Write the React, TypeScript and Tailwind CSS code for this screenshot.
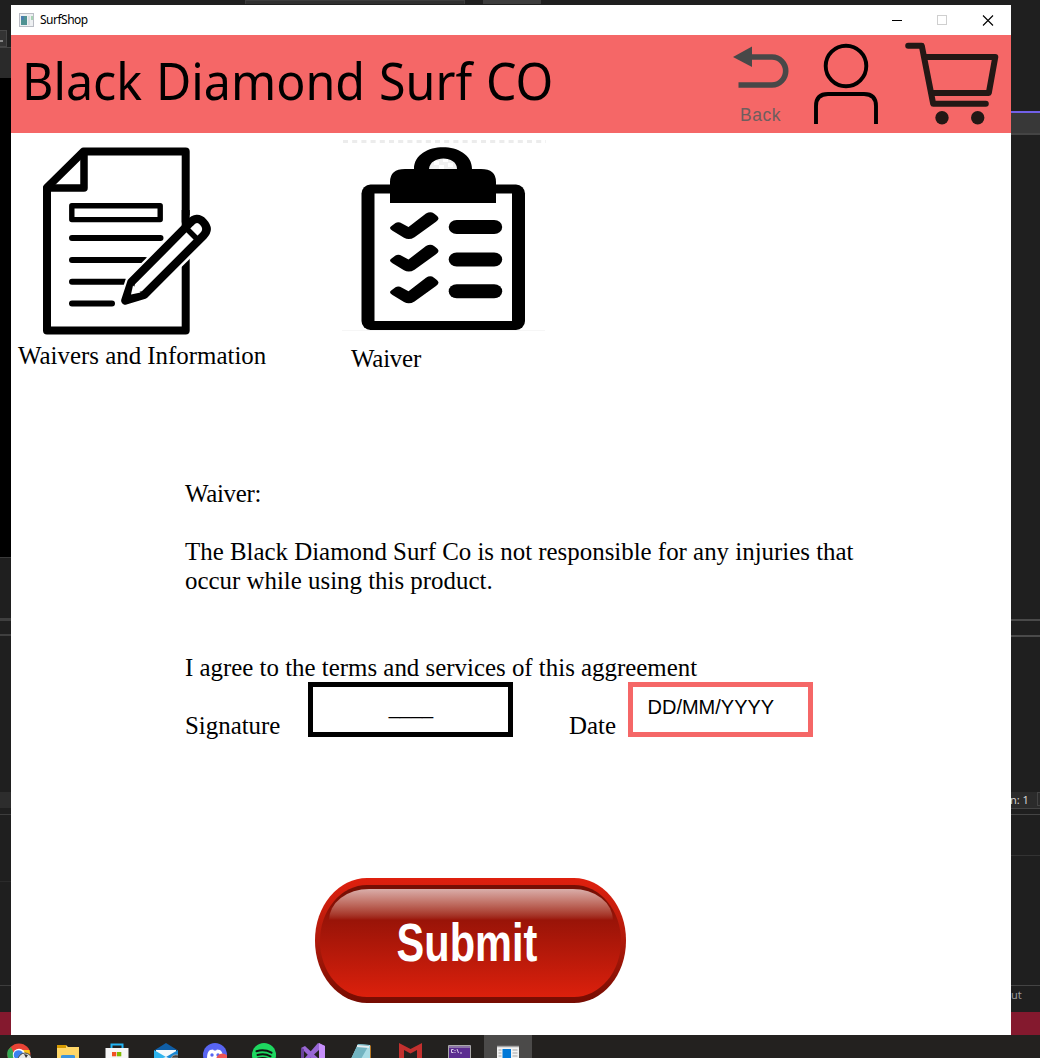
import React from "react";

function AppGlyph() {
  return (
    <svg width="16" height="14" viewBox="0 0 16 14" className="block">
      <rect x="0.5" y="0.5" width="14" height="13" fill="#eef0f2" stroke="#b9bcc4" />
      <rect x="2" y="3" width="6" height="9" fill="#4f9292" />
      <rect x="2" y="3" width="3" height="4" fill="#4a7fae" />
      <rect x="9" y="3" width="2" height="9" fill="#dcdfe2" />
      <rect x="12" y="3" width="2" height="4" fill="#a8d3b4" />
    </svg>
  );
}

function TitleBar() {
  return (
    <div className="flex h-[30px] shrink-0 items-center bg-white pl-2">
      <AppGlyph />
      <span className="ml-[5px] font-['Noto_Sans'] text-[12px] tracking-[-0.5px] text-black">SurfShop</span>
      <svg width="104" height="14" viewBox="0 0 104 14" className="mr-[16px] ml-auto block" fill="none">
        <path d="M1 7.5h10" stroke="#000" />
        <rect x="46.5" y="2.5" width="9" height="9" stroke="#cfcfcf" />
        <path d="M92 2.5l10 10M102 2.5l-10 10" stroke="#000" strokeWidth="1.1" />
      </svg>
    </div>
  );
}

function Header() {
  return (
    <header className="flex h-[98px] shrink-0 bg-[#f56767]">
      <h1 className="mt-[11px] ml-[10.500px] w-[539.500px] origin-left scale-x-[0.948] font-['Noto_Sans'] text-[51px] leading-[68px] [word-spacing:1.500px] whitespace-nowrap text-black">
        Black Diamond Surf CO
      </h1>
      <div className="ml-[171px] flex w-[58px] flex-col">
        <svg width="58" height="46" viewBox="731.5 43 58 46" className="mt-[8px] block">
          <path d="M751 57h20.500a13.700 14 0 0 1 0 28h-33.500" fill="none" stroke="#484848" strokeWidth="5.6" />
          <path d="M732.500 57l19-10.500v20.500z" fill="#484848" />
        </svg>
        <span className="mt-[16px] ml-[8px] font-['Liberation_Sans'] text-[17.500px] leading-[20px] tracking-[0.500px] text-[#6e5e5e]">
          Back
        </span>
      </div>
      <svg width="70" height="84" viewBox="812 42 70 84" className="mt-[7px] ml-[22px] block" fill="none" stroke="#000" strokeWidth="3.9">
        <circle cx="846" cy="66" r="20.300" />
        <path d="M816 124v-18q0-12 12-12h36q12 0 12 12v18" />
      </svg>
      <svg width="96" height="84" viewBox="904 42 96 84" className="mt-[7px] ml-[22px] block" fill="none" stroke="#231815" strokeWidth="6" strokeLinejoin="round" strokeLinecap="round">
        <path d="M908.200 45.800h13.600l11.400 58h52.600" />
        <path d="M926 57h69.300l-6.500 36h-55.500" />
        <g fill="#231815" stroke="none">
          <circle cx="942" cy="117.800" r="6.700" />
          <circle cx="977.700" cy="117.800" r="6.700" />
        </g>
      </svg>
    </header>
  );
}

function DocumentIcon() {
  return (
    <svg width="172" height="190" viewBox="41 146 172 190" className="block" fill="none" stroke="#000" strokeLinejoin="round" strokeLinecap="round">
      <path d="M83.500 151.500h102.200v179H47V187.500z" strokeWidth="8" />
      <path d="M84 152v36H47" strokeWidth="7.500" />
      <rect x="71.800" y="205.800" width="88.400" height="13.800" strokeWidth="5.400" />
      <path d="M72 238h88.500M72 260h73M72 281.800h53M72 303.500h40" strokeWidth="6" />
      <path d="M125 300.500l6-18.500 59-59.500q7-7 14 0t0 14l-59 58z" fill="#fff" stroke="#fff" strokeWidth="12" />
      <path d="M185.700 210v18" strokeWidth="8" strokeLinecap="butt" />
      <path d="M125.300 300.500l6-18.300 58.500-59q7-8 13.500-1t0 13.500l-59 59z" fill="#fff" strokeWidth="8.300" />
      <path d="M186 228l9.500 9.500" strokeWidth="5.500" />
      <path d="M130 284l12 11-17 6z" fill="#000" stroke="none" />
      <path d="M133 285.500l7.500 7-9.500 2z" fill="#fff" stroke="none" />
    </svg>
  );
}

function ClipboardIcon() {
  const rows = [0, 32.5, 64.2];
  return (
    <svg width="204" height="198" viewBox="342 138 204 198" className="block">
      <path d="M343 141.500h203" stroke="#ececec" strokeWidth="3" strokeDasharray="5 4.200" />
      <path d="M339 330.500h206" stroke="#f6f6f6" />
      <rect x="361.500" y="184.500" width="163.500" height="145.500" rx="9" />
      <rect x="374.500" y="193.500" width="137.500" height="127.500" fill="#fff" />
      <path d="M390 203v-21q0-13 15-13h9c0-29 58-29 58 0h9q15 0 15 13v21z" />
      <path d="M429 169c1-14 28-14 28 0z" fill="#f0f0f0" />
      <path d="M434 161h5v4h-5zM443 159h5v3h-5zM439 165h5v4h-5zM448 163h5v4h-5z" fill="#fff" />
      {rows.map((y) => (
        <g key={y} transform={`translate(0 ${y})`}>
          <path d="M390 228q0-1 1.500-2l4-3q3-1.700 6.500.5l6.500 3.500 17.500-13.500q4.500-2.700 8 0 4.500 3 4.500 5 0 1.500-2.500 3.200l-21.500 15.500q-5.500 3.500-10.500.5l-11.500-7q-2.500-1.500-2.500-2.700z" />
          <rect x="448.700" y="220" width="53.500" height="14" rx="8" ry="7" />
        </g>
      ))}
    </svg>
  );
}

function SubmitButton() {
  return (
    <button className="mt-[138px] ml-[304px] block h-[125px] w-[311px] rounded-[52px/62px] bg-linear-to-b from-[#df200e] via-[#b01a0b] to-[#760c02] pt-[7px] pr-[5px] pb-[6px] pl-[5px]">
      <span className="block h-full w-full rounded-[47px/56px] bg-linear-to-b from-[#760f04] from-5% via-[#9a1408] via-32% to-[#dc200c] pt-[4px]">
        <span className="mx-auto block h-[31px] w-[284px] rounded-t-[44px_34px] bg-linear-to-b from-[#d9aeaa] to-[#9a1408]" />
        <span className="mx-auto mt-[-8px] block w-[184px] origin-center translate-x-[-4px] scale-x-[0.77] text-center font-['Liberation_Sans'] text-[54px] leading-[60px] font-bold text-white">
          Submit
        </span>
      </span>
    </button>
  );
}

function Content() {
  return (
    <main className="flex grow flex-col bg-white font-['Liberation_Serif'] text-[24.900px] leading-[29px] text-black">
      <div className="flex h-[346px] shrink-0">
        <div className="w-[320px] shrink-0 pt-[13px]">
          <div className="ml-[30px]">
            <DocumentIcon />
          </div>
          <p className="mt-[5px] ml-[7px] whitespace-nowrap">Waivers and Information</p>
        </div>
        <div className="pt-[5px] pl-[11px]">
          <ClipboardIcon />
          <p className="mt-[8px] ml-[9px] tracking-[-0.2px]">Waiver</p>
        </div>
      </div>
      <div className="ml-[174px] flex w-[700px] shrink-0 flex-col">
        <p className="tracking-[-0.3px]">Waiver:</p>
        <p className="mt-[29px] whitespace-nowrap">
          The Black Diamond Surf Co is not responsible for any injuries that
          <br />
          occur while using this product.
        </p>
        <p className="mt-[58px] whitespace-nowrap">I agree to the terms and services of this aggreement</p>
        <div className="flex h-[58px] items-start">
          <span className="w-[123px] pt-[29px]">Signature</span>
          <div className="h-[55px] w-[205px] border-5 border-black pt-[8px] pl-px text-center font-['Liberation_Sans'] text-[20px] leading-[24px]">
            ____
          </div>
          <span className="ml-[56px] w-[59px] pt-[29px]">Date</span>
          <div className="h-[55px] w-[185px] border-5 border-[#f56767] pt-[8px] pl-[14.500px] font-['Liberation_Sans'] text-[20px] leading-[24px]">
            DD/MM/YYYY
          </div>
        </div>
      </div>
      <SubmitButton />
    </main>
  );
}

function LeftEdge() {
  return (
    <div className="flex w-[11px] shrink-0 flex-col bg-[#1f1f1f]">
      <div className="mt-[25px] h-[17px] w-[7px] border border-l-0 border-[#464646] bg-[#333333] pt-[9px]">
        <div className="h-[2px] w-[3px] bg-[#888888]" />
      </div>
      <div className="h-[31px] border-t border-[#444444] bg-[#2a2a2a]" />
      <div className="h-[480px] border-b border-[#3a3a3a] bg-black" />
      <div className="mt-[60px] h-[3px] bg-[#3f3f3f]" />
      <div className="mt-[13px] h-[2px] bg-[#3f3f3f]" />
      <div className="mt-[156px] h-[16px] bg-[#2d2d2d]" />
      <div className="mt-[6px] h-px bg-[#3d3d3d]" />
      <div className="mt-[66px] h-px bg-[#2b2b2b]" />
      <div className="mt-[103px] h-px bg-[#3d3d3d]" />
      <div className="mt-auto h-[23px] bg-[#84192e]" />
    </div>
  );
}

function RightEdge() {
  return (
    <div className="flex w-[29px] shrink-0 flex-col overflow-hidden bg-[#1f1f1f] font-['Noto_Sans'] whitespace-nowrap">
      <div className="mt-[106px] h-[2px] bg-[#7160e8]" />
      <div className="h-[22px] border-b-2 border-[#444444] bg-[#383838]" />
      <div className="mt-[484px] h-[2px] bg-[#4a4a4a]" />
      <div className="mt-[14px] h-[2px] bg-[#4a4a4a]" />
      <div className="mt-[155px] flex h-[17px] border-b border-[#444444] bg-[#2b2b2b] text-[11px] leading-[16px] text-[#d6d6d6]">
        <span className="ml-[-1px] w-[27px]">n: 1</span>
        <span className="h-[14px] w-[3px] border border-r-0 border-[#444444]" />
      </div>
      <div className="mt-[5px] h-px bg-[#444444]" />
      <div className="mt-[40px] h-px bg-[#333333]" />
      <div className="mt-[129px] h-px bg-[#444444]" />
      <div className="mt-[1px] h-[16px] text-[11px] leading-[16px] text-[#9a9a9a]">ut</div>
      <div className="mt-auto h-[23px] bg-[#84192e]" />
    </div>
  );
}

const taskIcons: React.ReactNode[] = [
  <g key="browser">
    <circle cx="12" cy="12" r="11.500" fill="#ea4335" />
    <path d="M1 7q-2 5 1 10l7-2-5-11z" fill="#34a853" />
    <path d="M12 7h10.500q1 5 0 8H12z" fill="#fbc116" />
    <circle cx="12" cy="12" r="6.200" fill="#fff" />
    <circle cx="11.500" cy="12" r="4.800" fill="#3b82f0" />
    <circle cx="18" cy="17" r="7" fill="#e4e6e5" stroke="#444" />
    <path d="M17 11l4 1-2 3z" fill="#333" />
  </g>,
  <g key="folder">
    <path d="M1 2h9l2 2h11v12H1z" fill="#ffd768" />
    <path d="M1 2h9v3H1z" fill="#d69a00" />
    <path d="M5 15v-2q0-1 2-1h10q2 0 2 1v2z" fill="#3b94dd" />
  </g>,
  <g key="store">
    <path d="M6.500 7V1.500h11V7" fill="none" stroke="#23b5f5" strokeWidth="2" />
    <path d="M.5 5h23v11H.5z" fill="#f6f6f6" />
    <path d="M7 9h4.300v4.300H7z" fill="#f25022" />
    <path d="M12 9h4.300v4.300H12z" fill="#7fba00" />
  </g>,
  <g key="mail">
    <path d="M0 7.500L12 0l12 7.500z" fill="#0f5ea6" />
    <path d="M2 7h20v9H2z" fill="#f3f9fc" />
    <path d="M0 7l12 7-6 2H0z" fill="#2eb4ee" />
    <path d="M24 7l-12 7 6 2h6z" fill="#1687d4" />
    <path d="M17 15q2-4 7-3l3 3z" fill="#444" stroke="#bbb" strokeWidth=".7" />
  </g>,
  <g key="chat">
    <circle cx="12" cy="12" r="12" fill="#5865f2" />
    <path d="M4 15q0-6 3-8l3-.5 1 1h2l1-1 3 .5q3 2 3 8z" fill="#fff" />
    <circle cx="9" cy="12" r="1.700" fill="#5865f2" />
    <circle cx="15" cy="12" r="1.700" fill="#5865f2" />
    <circle cx="19.500" cy="17" r="6.500" fill="#ed5555" />
  </g>,
  <g key="music">
    <circle cx="12" cy="12" r="12" fill="#1ed760" />
    <path d="M4.500 8.200q8-2.300 15 1.500M5.500 12q7-2 13 1.300M6 15.500q6-1.500 11 1" fill="none" stroke="#121212" strokeWidth="2" strokeLinecap="round" />
  </g>,
  <g key="studio">
    <path d="M0 5l4-2 14 13h-7z" fill="#9b68d6" />
    <path d="M0 5l3 1v10H0z" fill="#6b439d" />
    <path d="M17 0l7 3v13h-6V7l-10 9H3z" fill="#9867d5" />
    <path d="M18 0l6 3v13h-6z" fill="#c790fb" />
  </g>,
  <g key="notes">
    <path d="M8 1l12 1v14H1z" fill="#a9dce5" />
    <path d="M8 1l11 1-8 14H1z" fill="#72b4c1" />
    <path d="M7 3l12 1" stroke="#e6edf0" strokeWidth="2" />
    <path d="M20 2l1 1v13h-1z" fill="#b87722" />
  </g>,
  <path key="shield" d="M0 0l11.500 6L23 0v16h-5V7l-6.500 3.500L5 7v9H0z" fill="#c2302e" />,
  <g key="terminal">
    <path d="M.5 2.500h22V16H.5z" fill="#5c2d91" stroke="#a9a9a9" />
    <path d="M1 4h21" stroke="#bdbdbd" />
    <path d="M5.500 6.500h-2v3h2M7 7v1m0 1v1M9 6l1.500 4M12 10h2" fill="none" stroke="#e7dcf2" strokeWidth=".9" />
  </g>,
  <g key="window">
    <path d="M1 3h22v13H1z" fill="#f2f2f2" />
    <path d="M1 3.500h22" stroke="#a2a2a2" strokeWidth="1.500" />
    <path d="M6.500 6h8.500v10H6.500z" fill="#0078d7" />
    <path d="M2.500 7h3m-3 3h3m-3 3h3M16.500 7h5m-5 3h5m-5 3h5" stroke="#a5a5a5" />
  </g>,
];

function Taskbar() {
  return (
    <div className="flex h-[23px] shrink-0 overflow-hidden bg-[#23211f]">
      <div className="ml-[-6px] flex">
        {taskIcons.map((icon, i) => (
          <div key={i} className="flex w-[49px] shrink-0 justify-center pt-[8px] last:w-[48px] last:bg-[#4b4a49]">
            <svg width="24" height="15" viewBox="0 0 24 15" className="block">
              {icon}
            </svg>
          </div>
        ))}
      </div>
    </div>
  );
}

export default function App() {
  return (
    <div className="flex h-[1058px] w-[1040px] flex-col overflow-hidden bg-[#1f1f1f]">
      <div className="flex h-[5px] shrink-0">
        <div className="ml-[245px] h-[4px] w-[220px] border border-b-0 border-[#3d3d3d] bg-[#303030]" />
        <div className="ml-[18px] h-[4px] w-[58px] bg-[#3d3d3d]" />
      </div>
      <div className="flex h-[1030px] shrink-0">
        <LeftEdge />
        <div className="flex w-[1000px] shrink-0 flex-col">
          <TitleBar />
          <Header />
          <Content />
        </div>
        <RightEdge />
      </div>
      <Taskbar />
    </div>
  );
}
